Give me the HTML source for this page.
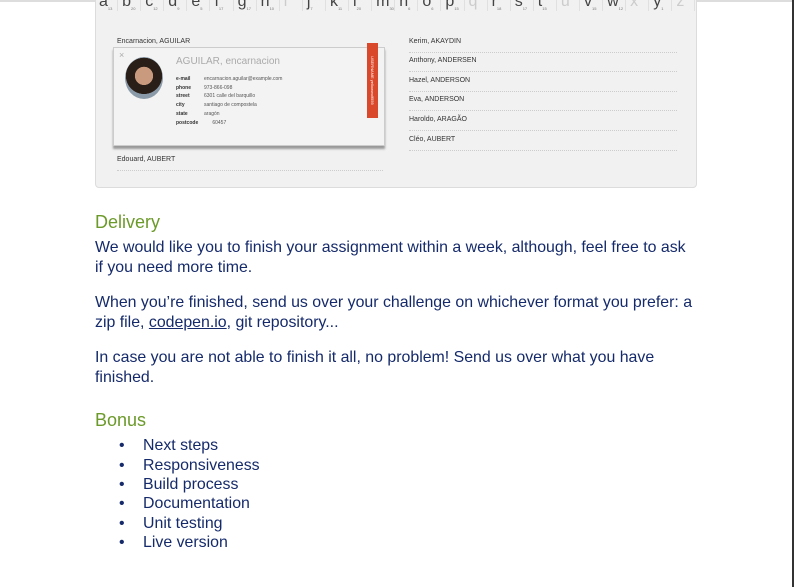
<!DOCTYPE html>
<html><head><style>
body{margin:0;width:794px;height:587px;background:#fff;position:relative;overflow:hidden;font-family:"Liberation Sans",sans-serif}
.shot{position:absolute;left:95px;top:-4px;width:600px;height:190px;background:#f1f1f1;border:1px solid #dcdcdc;border-radius:4px}
.letters{position:absolute;left:95px;top:-7px;width:602px;height:18px;font-size:16px;color:#444;white-space:nowrap}
.letters span{display:inline-block;width:23.1px;border-right:1px solid #e0e0e0;padding-left:4px;box-sizing:border-box}
.letters sub{font-size:4px;color:#777}
.letters .d{color:#ccc}
.ln{position:absolute;font-size:7px;color:#333;border-bottom:1px dotted #ccc;padding-bottom:7px}
.card{position:absolute;left:113px;top:47px;width:270px;height:97px;background:#f3f3f3;border:1px solid #ccc;box-shadow:0 3px 2px #999}
.h{position:absolute;color:#6c9a2a;font-size:18px;left:95px}
.p{position:absolute;left:95px;color:#152a6a;font-size:15.9px;line-height:19.5px;width:600px}
.li{position:absolute;left:143px;color:#152a6a;font-size:15.9px}
.li:before{content:"•";position:absolute;left:-24px}
</style></head><body>
<div style="position:absolute;left:0;top:0;width:794px;height:2px;background:#ddd"></div>
<div style="position:absolute;right:0;top:0;width:2px;height:587px;background:#333"></div>
<div class="shot"></div>
<div class="letters"><span>a<sub>13</sub></span><span>b<sub>20</sub></span><span>c<sub>12</sub></span><span>d<sub>9</sub></span><span>e<sub>5</sub></span><span>f<sub>17</sub></span><span>g<sub>17</sub></span><span>h<sub>10</sub></span><span class="d">i</span><span>j<sub>7</sub></span><span>k<sub>11</sub></span><span>l<sub>20</sub></span><span>m<sub>30</sub></span><span>n<sub>6</sub></span><span>o<sub>6</sub></span><span>p<sub>15</sub></span><span class="d">q</span><span>r<sub>18</sub></span><span>s<sub>17</sub></span><span>t<sub>15</sub></span><span class="d">u</span><span>v<sub>15</sub></span><span>w<sub>12</sub></span><span class="d">x</span><span>y<sub>1</sub></span><span class="d">z</span></div>
<div class="ln" style="left:117px;top:38px;width:266px">Encarnacion, AGUILAR</div>
<div class="ln" style="left:117px;top:156px;width:266px">Edouard, AUBERT</div>
<div class="ln" style="left:409px;top:38px;width:268px">Kerim, AKAYDIN</div>
<div class="ln" style="left:409px;top:57px;width:268px">Anthony, ANDERSEN</div>
<div class="ln" style="left:409px;top:77px;width:268px">Hazel, ANDERSON</div>
<div class="ln" style="left:409px;top:96px;width:268px">Eva, ANDERSON</div>
<div class="ln" style="left:409px;top:116px;width:268px">Haroldo, ARAGÃO</div>
<div class="ln" style="left:409px;top:136px;width:268px">Cléo, AUBERT</div>
<div class="card">
<div style="position:absolute;left:5px;top:2px;color:#aaa;font-size:9px">×</div>
<div style="position:absolute;left:11px;top:9px;width:38px;height:42px;border-radius:50%;background:radial-gradient(circle at 50% 45%,#c99a7e 0 30%,#2a1e18 31% 60%,#8a9aa8 61%)"></div>
<div style="position:absolute;left:62px;top:8px;color:#aaa;font-size:10px">AGUILAR, encarnacion</div>
<div style="position:absolute;left:62px;top:27px;font-size:5px;line-height:8.7px;color:#333"><b>e-mail</b><br><b>phone</b><br><b>street</b><br><b>city</b><br><b>state</b><br><b>postcode</b></div>
<div style="position:absolute;left:90px;top:27px;font-size:5px;line-height:8.7px;color:#555">encarnacion.aguilar@example.com<br>973-866-098<br>6301 calle del barquillo<br>santiago de compostela<br>aragón<br>&nbsp;&nbsp;&nbsp;&nbsp;&nbsp;&nbsp;60457</div>
</div>
<div style="position:absolute;left:367px;top:43px;width:11px;height:75px;background:#d9482b;color:#fff;font-size:4px;writing-mode:vertical-rl;text-align:center;line-height:11px">USERNAME yellowwolf559</div>
<div class="h" style="top:212px">Delivery</div>
<div class="p" style="top:238px">We would like you to finish your assignment within a week, although, feel free to ask if you need more time.</div>
<div class="p" style="top:293px">When you’re finished, send us over your challenge on whichever format you prefer: a zip file, <u>codepen.io</u>, git repository...</div>
<div class="p" style="top:348px">In case you are not able to finish it all, no problem! Send us over what you have finished.</div>
<div class="h" style="top:410px">Bonus</div>
<div class="li" style="top:437px">Next steps</div>
<div class="li" style="top:457px">Responsiveness</div>
<div class="li" style="top:476px">Build process</div>
<div class="li" style="top:495px">Documentation</div>
<div class="li" style="top:515px">Unit testing</div>
<div class="li" style="top:534px">Live version</div>
</body></html>
